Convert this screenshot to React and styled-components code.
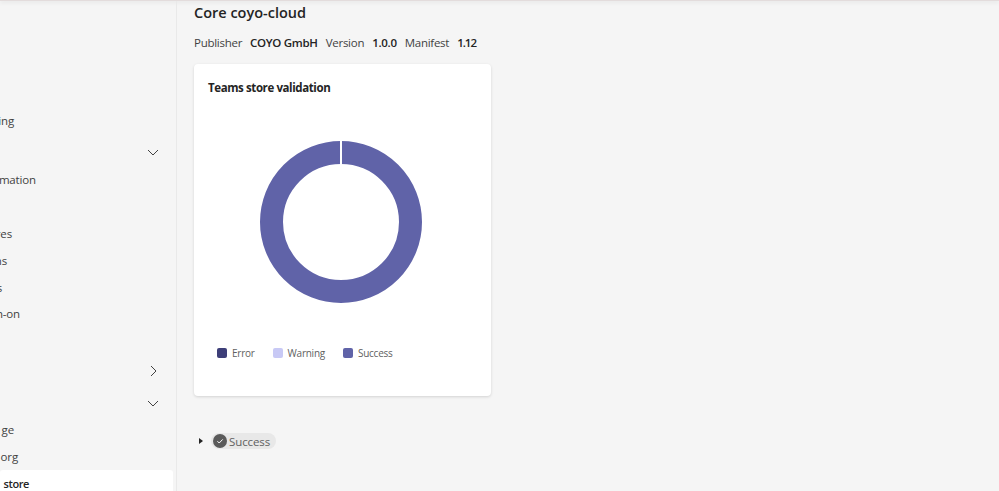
import React from 'react';
import styled, { createGlobalStyle } from 'styled-components';

const GlobalStyle = createGlobalStyle`
    html, body {
        margin: 0;
        height: 100%;
        overflow: hidden;
        background: #f5f5f5;
    }
    body {
        font-family: "Open Sans", "Noto Sans", sans-serif;
        color: #242424;
    }
`;

const Page = styled.div`
    width: 999px;
    height: 491px;
    display: flex;
    flex-direction: column;
    overflow: hidden;
`;
const TopBar = styled.div`
    flex: none;
    height: 1px;
    background: #e3dcdc;
    box-shadow: 0 1px 4px rgba(0, 0, 0, 0.18);
`;
const Body = styled.div`
    flex: 1;
    display: flex;
    min-height: 0;
`;
const Sidebar = styled.nav`
    flex: none;
    box-sizing: border-box;
    width: 177px;
    height: 490px;
    padding: 109px 3px 0 0;
    border-right: 1px solid #e9e9e9;
    overflow: hidden;
`;
const NavRow = styled.div`
    height: 21px;
    margin-top: ${(p) => p.$top}px;
    padding-right: 14px;
    display: flex;
    align-items: center;
    justify-content: space-between;
    font-size: 11.5px;
    letter-spacing: -0.15px;
    line-height: 21px;
    color: #424242;
    white-space: nowrap;
    ${(p) => p.$active && `
        box-sizing: border-box;
        padding-top: 6px;
        align-items: flex-start;
        font-size: 11px;
        letter-spacing: -0.4px;
        line-height: 15px;
        background: #fff;
        border-radius: 3px 3px 0 0;
        color: #242424;
        font-weight: 600;
    `}
`;
// the sidebar is scrolled sideways, so a label is anchored by where it ends
const NavLabel = styled.span`
    flex: none;
    width: ${(p) => p.$end}px;
    display: flex;
    justify-content: flex-end;
`;
const Main = styled.main`
    flex: 1;
    padding: 2px 0 0 17px;
    min-width: 0;
`;
const Title = styled.h1`
    margin: 0;
    font-size: 14.5px;
    line-height: 20px;
    font-weight: 600;
    color: #242424;
`;
const MetaRow = styled.div`
    margin-top: 11px;
    display: flex;
    gap: 8px;
    font-size: 11.5px;
    letter-spacing: -0.27px;
    line-height: 18px;
    color: #424242;
`;
const MetaValue = styled.span`
    font-weight: 600;
    color: #242424;
    letter-spacing: ${(p) => (p.$tight ? '-1px' : '-0.3px')};
`;
const Card = styled.section`
    box-sizing: border-box;
    width: 297px;
    height: 332px;
    margin-top: 12px;
    padding: 15px 18px 0 14px;
    background: #fff;
    border-radius: 4px;
    box-shadow: 0 1px 3px rgba(0, 0, 0, 0.14);
`;
const CardTitle = styled.h2`
    margin: 0;
    font-size: 11.5px;
    letter-spacing: -0.4px;
    line-height: 18px;
    font-weight: 700;
    color: #242424;
`;
const Chart = styled.div`
    margin-top: 43px;
    display: flex;
    justify-content: center;
`;
const Legend = styled.div`
    margin-top: 41px;
    padding-left: 9px;
    display: flex;
    gap: 18px;
`;
const LegendItem = styled.div`
    display: flex;
    align-items: center;
    gap: 5px;
    font-size: 10px;
    letter-spacing: -0.25px;
    line-height: 16px;
    color: #616161;
`;
const Swatch = styled.span`
    width: 10px;
    height: 10px;
    border-radius: 2px;
    background: ${(p) => p.$color};
`;
const ResultRow = styled.div`
    margin-top: 37px;
    display: flex;
    align-items: center;
    gap: 8px;
    padding-left: 5px;
`;
const Caret = styled.span`
    width: 0;
    height: 0;
    border-left: 4px solid #242424;
    border-top: 3px solid transparent;
    border-bottom: 3px solid transparent;
`;
const Pill = styled.div`
    display: flex;
    align-items: center;
    gap: 2px;
    height: 16px;
    padding: 0 6px 0 2px;
    border-radius: 8px;
    background: #e8e8e8;
    font-size: 11.5px;
    letter-spacing: -0.1px;
    color: #616161;
`;
const CheckBadge = styled.svg`
    width: 14px;
    height: 14px;
    display: block;
`;

const Chevron = ({ right }) => (
    <svg width="12" height="12" viewBox="0 0 12 12" fill="none" stroke="#424242" strokeWidth="1">
        <path d={right ? 'M4 1l5 5-5 5' : 'M1 4l5 5 5-5'} />
    </svg>
);

const navRows = [
    { text: 'ing', end: 14, top: 0 },
    { top: 10, chevron: 'down' },
    { text: 'mation', end: 36, top: 7 },
    { text: 'res', end: 12, top: 33 },
    { text: 'ns', end: 7, top: 6 },
    { text: 's', end: 2, top: 6 },
    { text: 'n-on', end: 20, top: 5 },
    { top: 36, chevron: 'right' },
    { top: 11, chevron: 'down' },
    { text: 'ge', end: 14, top: 6 },
    { text: 'org', end: 18, top: 6 },
    { text: 'store', end: 29, top: 3, active: true },
];

const legend = [
    { label: 'Error', color: '#3d3e78' },
    { label: 'Warning', color: '#c8c9f5' },
    { label: 'Success', color: '#6063a8' },
];

function App() {
    return (
        <Page>
            <GlobalStyle />
            <TopBar />
            <Body>
                <Sidebar>
                    {navRows.map((row, i) => (
                        <NavRow key={i} $top={row.top} $active={row.active}>
                            <NavLabel $end={row.end || 0}>{row.text}</NavLabel>
                            {row.chevron && <Chevron right={row.chevron === 'right'} />}
                        </NavRow>
                    ))}
                </Sidebar>
                <Main>
                    <Title>Core coyo-cloud</Title>
                    <MetaRow>
                        <span>Publisher</span>
                        <MetaValue>COYO GmbH</MetaValue>
                        <span>Version</span>
                        <MetaValue>1.0.0</MetaValue>
                        <span>Manifest</span>
                        <MetaValue $tight>1.12</MetaValue>
                    </MetaRow>
                    <Card>
                        <CardTitle>Teams store validation</CardTitle>
                        <Chart>
                            {/* donut ring, gap at twelve o'clock */}
                            <svg width="164" height="164" viewBox="0 0 164 164">
                                <circle cx="82" cy="82" r="69.5" fill="none" stroke="#6063a8" strokeWidth="23" />
                                <rect x="81" y="0" width="2" height="26" fill="#fff" />
                            </svg>
                        </Chart>
                        <Legend>
                            {legend.map((item) => (
                                <LegendItem key={item.label}>
                                    <Swatch $color={item.color} />
                                    {item.label}
                                </LegendItem>
                            ))}
                        </Legend>
                    </Card>
                    <ResultRow>
                        <Caret />
                        <Pill>
                            <CheckBadge viewBox="0 0 14 14">
                                <circle cx="7" cy="7" r="7" fill="#5b5b5b" />
                                <path d="M4.4 7.2l1.8 1.8 3.5-3.6" fill="none" stroke="#fff" strokeWidth="1" />
                            </CheckBadge>
                            Success
                        </Pill>
                    </ResultRow>
                </Main>
            </Body>
        </Page>
    );
}

export default App;
